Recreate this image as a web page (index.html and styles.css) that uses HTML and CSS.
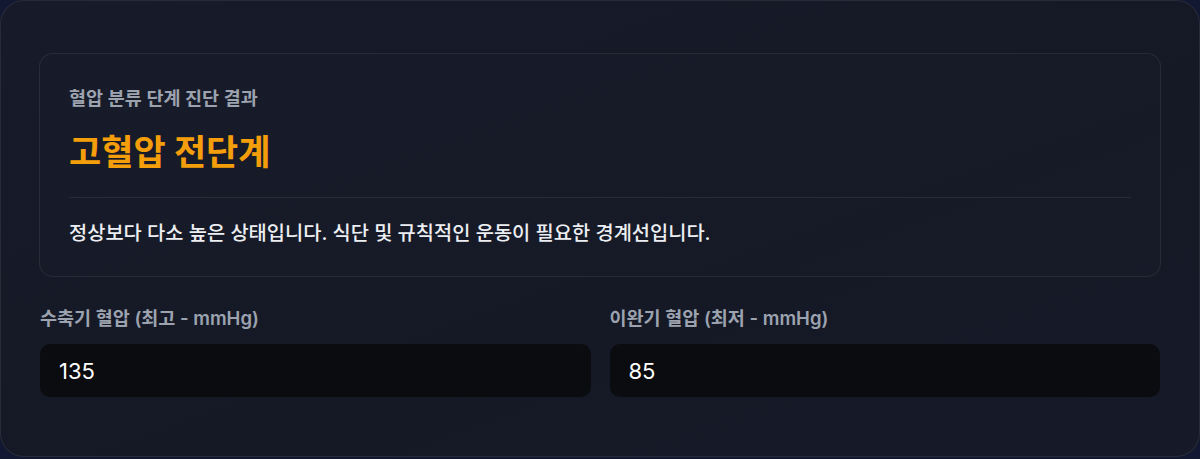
FILE: index.html
```html
<!DOCTYPE html>
<html lang="ko">
<head>
  <meta charset="UTF-8" />
  <meta name="viewport" content="width=device-width, initial-scale=1.0"/>
  <title>혈압 분류 단계 진단</title>
  <link rel="stylesheet" href="styles.css">
</head>
<body>

  <div class="card">
    <div class="result">
      <p class="result-label">혈압 분류 단계 진단 결과</p>
      <h2 class="result-title">고혈압 전단계</h2>
      <div class="divider"></div>
      <p class="result-desc">정상보다 다소 높은 상태입니다. 식단 및 규칙적인 운동이 필요한 경계선입니다.</p>
    </div>

    <div class="fields">
      <div class="field">
        <label for="sys">수축기 혈압 (최고 - mmHg)</label>
        <input id="sys" type="text" value="135" />
      </div>
      <div class="field">
        <label for="dia">이완기 혈압 (최저 - mmHg)</label>
        <input id="dia" type="text" value="85" />
      </div>
    </div>
  </div>

</body>
</html>
```

FILE: styles.css
```css
body {
  font-family: Inter, "Noto Sans CJK KR", sans-serif;
  background: #121832;
  margin: 0;
  padding: 0;
  color: #e5e7eb;
}

.card {
  background: linear-gradient(160deg, #171b29, #151926 60%, #161a28);
  border: 1px solid rgba(255,255,255,0.08);
  border-radius: 24px;
  padding: 52px 38px 0 38px;
  height: 457px;
  box-sizing: border-box;
}

.result {
  border: 1px solid rgba(255,255,255,0.07);
  border-radius: 14px;
  background: rgba(255,255,255,0.008);
  padding: 31px 29px 28px 29px;
}

.result-label {
  margin: 0 0 19px 0;
  font-size: 18.5px;
  line-height: 26px;
  font-weight: 600;
  color: #9ca3af;
}

.result-title {
  margin: 0 0 23px 0;
  font-size: 35px;
  line-height: 44px;
  font-weight: 700;
  color: #f59e0b;
}

.divider {
  height: 1px;
  background: rgba(255,255,255,0.08);
}

.result-desc {
  margin: 20px 0 0 0;
  font-size: 19.8px;
  line-height: 30px;
  font-weight: 500;
  color: #eceef2;
}

.fields {
  display: grid;
  grid-template-columns: 1fr 1fr;
  gap: 19px;
  margin-top: 28px;
  padding: 0 1px;
}

.field label {
  display: block;
  font-size: 18.5px;
  line-height: 26px;
  font-weight: 600;
  color: #9ca3af;
  margin-bottom: 13px;
}

.field input {
  display: block;
  width: 100%;
  box-sizing: border-box;
  height: 53px;
  background: #0b0c10;
  border: none;
  border-radius: 10px;
  padding: 0 19px;
  font-family: Inter, "Noto Sans CJK KR", sans-serif;
  font-size: 22px;
  color: #ffffff;
  outline: none;
}
```
